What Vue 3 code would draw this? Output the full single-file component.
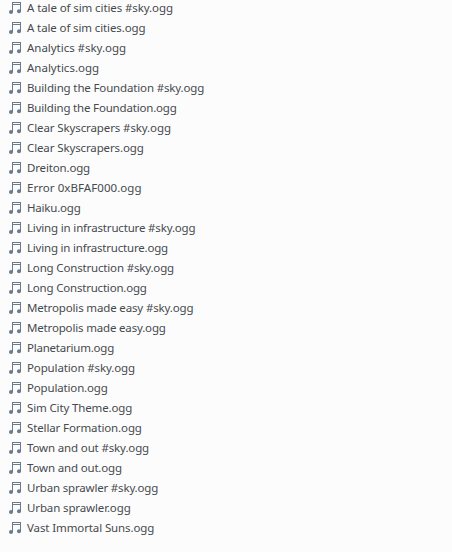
<script setup>
// Each entry: file name and its letter tracking in hundredths of a pixel
const files = [
  ['A tale of sim cities #sky.ogg', -10], ['A tale of sim cities.ogg', -12],
  ['Analytics #sky.ogg', -3], ['Analytics.ogg', 0],
  ['Building the Foundation #sky.ogg', -15], ['Building the Foundation.ogg', -18],
  ['Clear Skyscrapers #sky.ogg', -11], ['Clear Skyscrapers.ogg', -12],
  ['Dreiton.ogg', -16], ['Error 0xBFAF000.ogg', 6], ['Haiku.ogg', -20],
  ['Living in infrastructure #sky.ogg', -17], ['Living in infrastructure.ogg', -20],
  ['Long Construction #sky.ogg', -17], ['Long Construction.ogg', -20],
  ['Metropolis made easy #sky.ogg', -15], ['Metropolis made easy.ogg', -17],
  ['Planetarium.ogg', -22], ['Population #sky.ogg', -13], ['Population.ogg', -16],
  ['Sim City Theme.ogg', -14], ['Stellar Formation.ogg', -12],
  ['Town and out #sky.ogg', -14], ['Town and out.ogg', -16],
  ['Urban sprawler #sky.ogg', -18], ['Urban sprawler.ogg', -13],
  ['Vast Immortal Suns.ogg', -11],
]
</script>

<template>
  <ul class="files">
    <li v-for="[name, tracking] in files" :key="name" class="file">
      <svg class="icon" viewBox="0 0 12 12" width="12" height="12">
        <path d="M3 0H12V9H11V3H4V10H3ZM4 1V2H11V1Z" fill-rule="evenodd" />
        <circle cx="2" cy="10" r="2" />
        <circle cx="10" cy="9.2" r="2" />
      </svg>
      <span class="name" :style="{ letterSpacing: tracking / 100 + 'px' }">{{ name }}</span>
    </li>
  </ul>
</template>

<style>
body { margin: 0; background: #fcfcfc; }
</style>

<style scoped>
.files {
  box-sizing: border-box;
  height: 552px;
  margin: 0;
  padding: 0 0 0 9px;
  overflow: hidden;
  list-style: none;
  background: #fcfcfc;
  color: #464a4e;
  font: 11.5px/20px "Noto Sans", sans-serif;
}
.file { display: flex; align-items: center; gap: 6px; height: 20px; }
.file:first-child { margin-top: -2px; }
.icon { flex: none; fill: #697b8d; }
.name { white-space: pre; }
</style>
